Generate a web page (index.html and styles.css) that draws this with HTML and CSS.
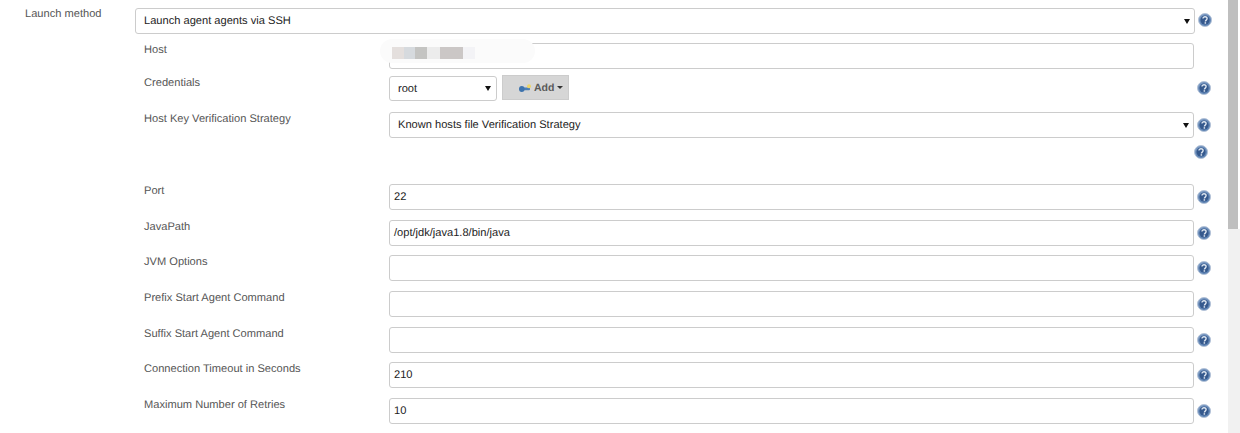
FILE: index.html
```
<!DOCTYPE html>
<html lang="en">
<head>
<meta charset="utf-8">
<title>Launch method</title>
<link rel="stylesheet" href="styles.css">
</head>
<body>
<svg class="defs" width="0" height="0" aria-hidden="true">
  <defs>
    <radialGradient id="hg" cx="40%" cy="35%" r="70%">
      <stop offset="0" stop-color="#8aa5ca"/>
      <stop offset="1" stop-color="#527aad"/>
    </radialGradient>
    <symbol id="help" viewBox="0 0 14 14">
      <circle cx="7" cy="7" r="6.5" fill="url(#hg)" stroke="#b4c3d8" stroke-width="1"/>
      <circle cx="7" cy="7" r="4.6" fill="#35598d"/>
      <path d="M5 5.6C5 4.4 6 3.8 7 3.8s2.1.6 2.1 1.8c0 1.5-1.7 1.5-1.7 2.9" fill="none" stroke="#dfe7f1" stroke-width="1.4"/>
      <rect x="6.6" y="9.2" width="1.5" height="1.5" fill="#dfe7f1"/>
    </symbol>
  </defs>
</svg>
<main class="page">
  <div class="top-row">
    <div class="top-label">Launch method</div>
    <div class="select wide"><span>Launch agent agents via SSH</span><i class="arrow"></i></div>
    <svg class="help"><use href="#help"/></svg>
  </div>
  <section class="sub">
    <div class="row host">
      <label>Host</label>
      <div class="field"><div class="input"></div><div class="redact"><b class="b1"></b><b class="b2"></b><b class="b3"></b><b class="b4"></b><b class="b5"></b><b class="b6"></b></div></div>
    </div>
    <div class="row cred">
      <label>Credentials</label>
      <div class="field cred-field">
        <div class="select small"><span>root</span><i class="arrow"></i></div>
        <div class="add">
          <svg class="key" viewBox="0 0 12 8"><rect x="2" y="3.6" width="9" height="2.6" rx="1" fill="#4d7fb5"/><ellipse cx="2.8" cy="5" rx="2.8" ry="3" fill="#3e73ad"/><circle cx="10" cy="2.2" r="2" fill="#ecd468"/></svg>
          <span>Add</span><i class="arrow mini"></i>
        </div>
      </div>
      <svg class="help"><use href="#help"/></svg>
    </div>
    <div class="row strategy">
      <label>Host Key Verification Strategy</label>
      <div class="field"><div class="select"><span>Known hosts file Verification Strategy</span><i class="arrow"></i></div></div>
      <svg class="help"><use href="#help"/></svg>
    </div>
    <div class="extra-help"><svg class="help"><use href="#help"/></svg></div>
    <div class="row std"><label>Port</label><div class="field"><div class="input">22</div></div><svg class="help"><use href="#help"/></svg></div>
    <div class="row std"><label>JavaPath</label><div class="field"><div class="input">/opt/jdk/java1.8/bin/java</div></div><svg class="help"><use href="#help"/></svg></div>
    <div class="row std"><label>JVM Options</label><div class="field"><div class="input"></div></div><svg class="help"><use href="#help"/></svg></div>
    <div class="row std"><label>Prefix Start Agent Command</label><div class="field"><div class="input"></div></div><svg class="help"><use href="#help"/></svg></div>
    <div class="row std"><label>Suffix Start Agent Command</label><div class="field"><div class="input"></div></div><svg class="help"><use href="#help"/></svg></div>
    <div class="row std"><label>Connection Timeout in Seconds</label><div class="field"><div class="input">210</div></div><svg class="help"><use href="#help"/></svg></div>
    <div class="row std"><label>Maximum Number of Retries</label><div class="field"><div class="input">10</div></div><svg class="help"><use href="#help"/></svg></div>
  </section>
</main>
<div class="scrollbar"><div class="thumb"></div></div>
</body>
</html>
```
FILE: styles.css
```
* { box-sizing: border-box; }
html, body { margin: 0; height: 433px; overflow: hidden; background: #fff; }
body {
  display: flex;
  font: 11.1px/14px "Liberation Sans", Arial, sans-serif;
  text-rendering: geometricPrecision;
  color: #333;
}
.defs { position: absolute; }
.page { width: 1228px; padding: 7px 0 0 25px; }
.scrollbar { width: 12px; background: #f1f1f1; }
.thumb { height: 229px; background: #bfbfbf; border-right: 2px solid #fff; }
.top-row { display: flex; align-items: flex-start; }
.top-label { width: 110px; color: #555; }
.wide { width: 1060px; height: 26px; margin-top: 1px; padding-left: 8px; }
.sub { padding-left: 119px; padding-top: 9px; }
.row { display: flex; align-items: flex-start; }
.row label { width: 245px; line-height: 14px; color: #555; }
.field { width: 805px; position: relative; }
.input, .select {
  height: 26px;
  border: 1px solid #ccc;
  border-radius: 3px;
  background: #fff;
  color: #222;
  line-height: 24px;
  padding-left: 8px;
}
.input { padding-left: 4px; }
.select { display: flex; align-items: center; justify-content: space-between; padding-right: 4px; }
.arrow {
  width: 0; height: 0;
  border: 3px solid transparent;
  border-top: 5px solid #111;
  border-bottom: 0;
}
.help { width: 14px; height: 14px; flex: none; margin: 6px 0 0 2.5px; }
.host { height: 33px; }
.cred { height: 36px; }
.cred .help { margin-top: 5px; }
.strategy { height: 33px; }
.extra-help { height: 39px; padding: 0 0 0 1050px; }
.extra-help .help { margin: 0; display: block; }
.std { height: 35.67px; }
.cred-field { display: flex; gap: 5px; }
.small { width: 108px; height: 25px; padding-right: 5px; }
.add {
  width: 67px; height: 25px;
  margin-top: -1px;
  background: #d6d6d6;
  border: 1px solid #ccc;
  display: flex; align-items: center;
  padding-left: 16px;
  font-size: 10.5px; font-weight: bold; color: #5a5a5a;
}
.key { width: 12px; height: 8px; margin-right: 3px; }
.mini { margin-left: 3px; border-top: 3px solid #333; }
.redact {
  position: absolute; left: -9px; top: -4px;
  width: 155px; height: 24px;
  background: #fbfbfb;
  border-radius: 12px;
  display: flex; padding: 8px 0 0 12px;
}
.redact b { display: block; height: 12px; filter: blur(.4px); }
.b1 { width: 12px; background: #e4dfdd; }
.b2 { width: 11px; background: #d6dade; }
.b3 { width: 12px; background: #c4c4c2; }
.b4 { width: 13px; background: #ececec; }
.b5 { width: 23px; background: #cbc7c6; }
.b6 { width: 12px; background: #f3f3f6; }
```
